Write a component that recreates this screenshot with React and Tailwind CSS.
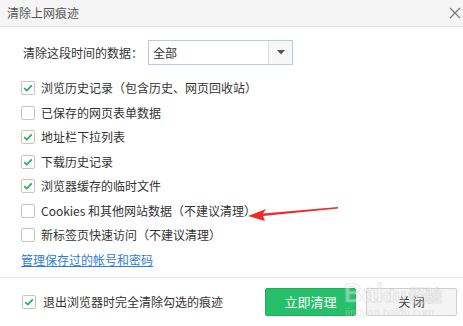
import React from "react";

const rows = [
  { label: "浏览历史记录（包含历史、网页回收站）", checked: true },
  { label: "已保存的网页表单数据", checked: false },
  { label: "地址栏下拉列表", checked: true },
  { label: "下载历史记录", checked: true },
  { label: "浏览器缓存的临时文件", checked: true },
  { label: "Cookies 和其他网站数据（不建议清理）", checked: false },
  { label: "新标签页快速访问（不建议清理）", checked: false },
];

const Check = ({ checked }) => (
  <span className="w-[14px] h-[14px] shrink-0 border border-[#c4c4c4] rounded-[2px] bg-white flex items-center justify-center">
    {checked && (
      <svg width="10" height="8" viewBox="0 0 10 8">
        <path d="M1.2 4.2 L3.8 6.6 L8.8 1.4" fill="none" stroke="#27b15d" strokeWidth="1.8" />
      </svg>
    )}
  </span>
);

const App = () => {
  return (
    <div
      className="relative w-[463px] h-[326px] bg-white overflow-hidden text-[12px] text-[#333]"
      style={{ fontFamily: '"Noto Sans CJK SC", "Noto Sans", sans-serif' }}
    >
      {/* title bar */}
      <div className="h-[27px] bg-[#f5f5f5] border-b border-[#dedede] flex items-center justify-between pl-[7px] pr-[1px]">
        <span className="text-[#555] leading-none">清除上网痕迹</span>
        <svg width="14" height="14" viewBox="0 0 14 14">
          <path d="M2 2 L12 12 M12 2 L2 12" stroke="#777" strokeWidth="1.1" />
        </svg>
      </div>

      {/* time range */}
      <div className="mt-[13px] h-[25px] flex items-center pl-[23px]">
        <span className="w-[125px] leading-none">清除这段时间的数据：</span>
        <div className="w-[145px] h-[25px] border border-[#b9cbdc] flex">
          <span className="flex-1 flex items-center pl-[4px] leading-none">全部</span>
          <span className="w-[24px] border-l border-[#d5dde5] bg-[#f7f7f7] flex items-center justify-center">
            <svg width="8" height="5" viewBox="0 0 8 5">
              <path d="M0 0 L8 0 L4 4.5 Z" fill="#555" />
            </svg>
          </span>
        </div>
      </div>

      {/* options */}
      <div className="mt-[11px] pl-[21px]">
        {rows.map((r) => (
          <div key={r.label} className="h-[24.5px] flex items-center gap-[6px]">
            <Check checked={r.checked} />
            <span className="leading-none">{r.label}</span>
          </div>
        ))}
        <div className="h-[24.5px] flex items-center">
          <a href="#" className="text-[#2f7bd9] underline leading-none">
            管理保存过的帐号和密码
          </a>
        </div>
      </div>

      {/* footer */}
      <div className="mt-[5px] border-t border-[#e6e6e6] pt-[10px] pl-[22px] pr-[6px] flex items-center">
        <Check checked={true} />
        <span className="ml-[7px] leading-none">退出浏览器时完全清除勾选的痕迹</span>
        <button className="ml-auto w-[91px] h-[28px] bg-[#27c06a] border border-[#22ad5e] rounded-[2px] text-white text-[13px]">
          立即清理
        </button>
        <button className="ml-[10px] w-[91px] h-[28px] bg-[#f4f4f4] border border-[#cfcfcf] rounded-[2px] text-[#333]">
          关 闭
        </button>
      </div>

      {/* red arrow annotation */}
      <svg className="absolute left-[246px] top-[202px]" width="94" height="20" viewBox="0 0 94 20">
        <path d="M2 14 L20 7 L17 11.5 L92 5 L92 6.5 L17 14 L19 19 Z" fill="#f02b2b" />
      </svg>

      {/* watermark */}
      <div className="absolute left-[344px] top-[281px] pointer-events-none opacity-40 leading-none">
        <div
          className="text-[25px] font-bold text-white"
          style={{ WebkitTextStroke: "1px #c8c8c8", fontFamily: "Arial, sans-serif" }}
        >
          Bai<span className="text-[19px]">du</span>
          <span className="text-[17px] ml-[2px]" style={{ fontFamily: '"Noto Sans CJK SC", sans-serif' }}>经验</span>
        </div>
        <div className="text-[11px] text-[#cfcfcf] mt-[1px] ml-[1px]" style={{ fontFamily: "Arial, sans-serif" }}>
          jingyan.baidu.com
        </div>
      </div>
    </div>
  );
};

export default App;
